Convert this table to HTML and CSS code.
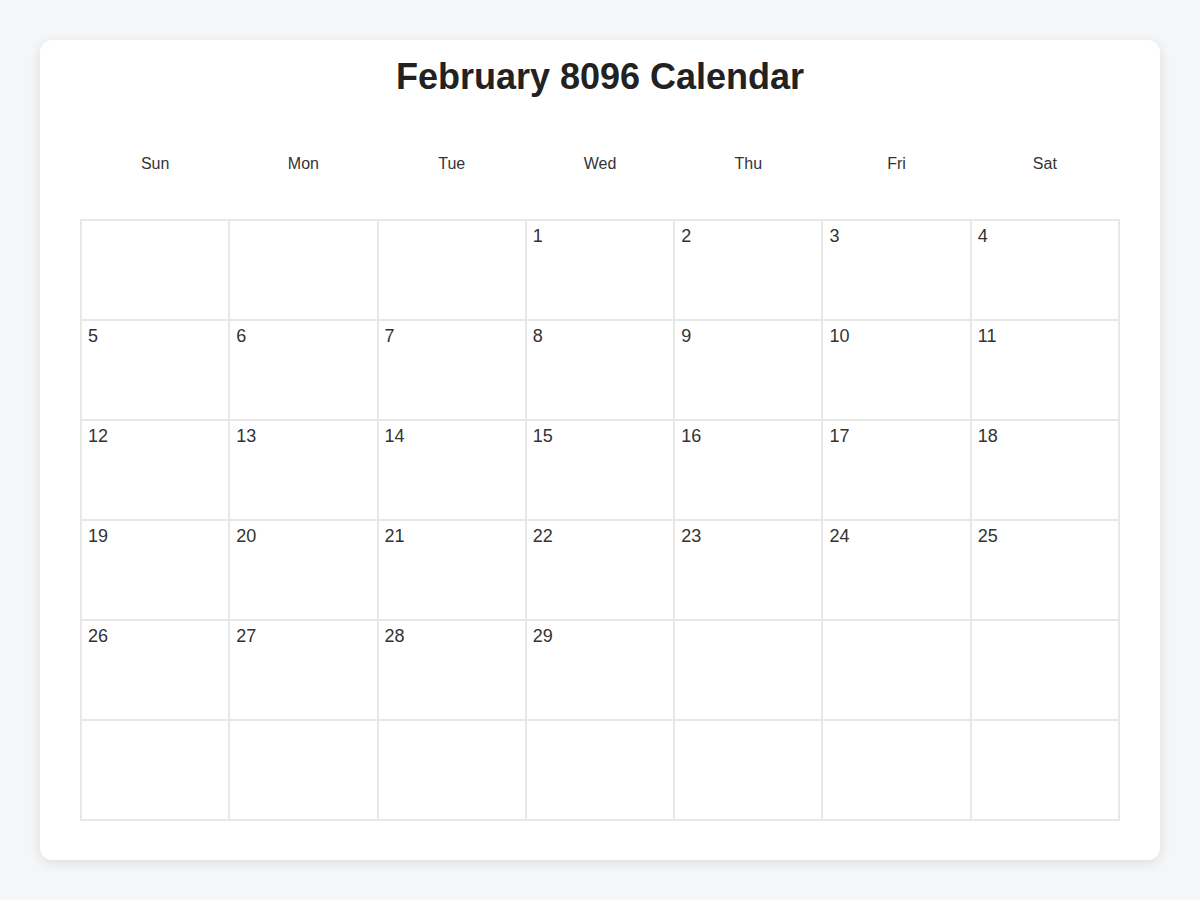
FILE: index.html
```html
<!DOCTYPE html>
<html lang="en">
<head>
<meta charset="utf-8">
<title>February 8096 Calendar</title>
<link rel="stylesheet" href="styles.css">
</head>
<body>
<div class="card">
  <h1 class="title">February 8096 Calendar</h1>
  <div class="weekdays">
    <div class="wd">Sun</div><div class="wd">Mon</div><div class="wd">Tue</div><div class="wd">Wed</div><div class="wd">Thu</div><div class="wd">Fri</div><div class="wd">Sat</div>
  </div>
  <div class="grid">
    <div class="cell"></div><div class="cell"></div><div class="cell"></div><div class="cell">1</div><div class="cell">2</div><div class="cell">3</div><div class="cell">4</div>
    <div class="cell">5</div><div class="cell">6</div><div class="cell">7</div><div class="cell">8</div><div class="cell">9</div><div class="cell">10</div><div class="cell">11</div>
    <div class="cell">12</div><div class="cell">13</div><div class="cell">14</div><div class="cell">15</div><div class="cell">16</div><div class="cell">17</div><div class="cell">18</div>
    <div class="cell">19</div><div class="cell">20</div><div class="cell">21</div><div class="cell">22</div><div class="cell">23</div><div class="cell">24</div><div class="cell">25</div>
    <div class="cell">26</div><div class="cell">27</div><div class="cell">28</div><div class="cell">29</div><div class="cell"></div><div class="cell"></div><div class="cell"></div>
    <div class="cell"></div><div class="cell"></div><div class="cell"></div><div class="cell"></div><div class="cell"></div><div class="cell"></div><div class="cell"></div>
  </div>
</div>
</body>
</html>
```
FILE: styles.css
```css
html, body {
  margin: 0;
  padding: 0;
}
body {
  background: #f5f6f8;
  font-family: "Liberation Sans", Arial, sans-serif;
  color: #333;
  padding: 40px;
}
.card {
  background: #fff;
  border-radius: 12px;
  box-shadow: 0 3px 12px rgba(0, 0, 0, 0.1);
  padding: 16px 40px 39px;
}
.title {
  margin: 0;
  font-size: 36px;
  line-height: 42px;
  font-weight: bold;
  text-align: center;
  color: #222;
}
.weekdays {
  display: grid;
  grid-template-columns: repeat(7, 1fr);
  padding: 56.5px 1px 46.5px;
}
.wd {
  text-align: center;
  font-size: 16px;
  line-height: 18px;
  color: #333;
}
.grid {
  display: grid;
  grid-template-columns: repeat(7, 1fr);
  grid-auto-rows: 100px;
  border: 1px solid #e8e8e8;
}
.cell {
  border: 1px solid #e8e8e8;
  padding: 5px 6px 3px;
  font-size: 18px;
  line-height: 20px;
  color: #333;
}
```
